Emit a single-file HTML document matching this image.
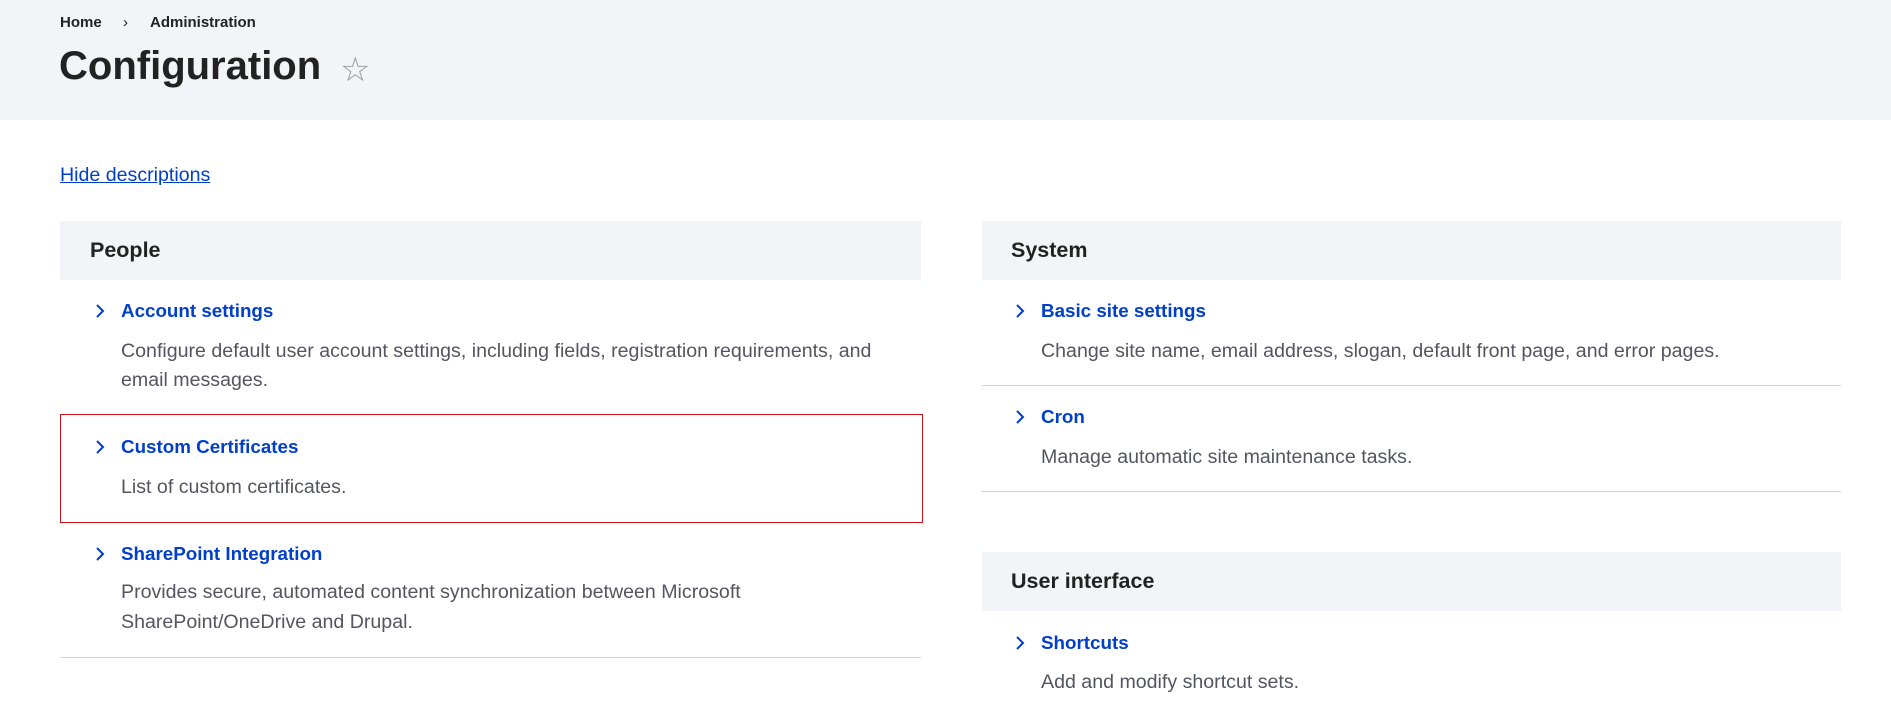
<!DOCTYPE html>
<html><head><meta charset="utf-8"><style>
body{margin:0;width:1891px;height:716px;overflow:hidden;background:#fff;font-family:"Liberation Sans",sans-serif;position:relative}
.a{position:absolute;white-space:nowrap}
.hdr{position:absolute;left:0;top:0;width:1891px;height:120px;background:#f3f4f7}
.bc{font-size:15px;font-weight:bold;color:#222;top:14px}
.box{position:absolute;background:#f3f4f7}
.h2{font-size:21.5px;font-weight:bold;color:#222}
.lk{font-size:18.8px;font-weight:bold;color:#003ecc}
.ds{font-size:19.6px;color:#545560}
.ln{position:absolute;height:1px;background:#d4d4d8}
.chev{position:absolute;width:14px;height:18px}
</style></head><body>
<div class="hdr"></div>
<div class="a bc" style="left:60px">Home</div>
<div class="a bc" style="left:123px;font-weight:normal">›</div>
<div class="a bc" style="left:150px">Administration</div>
<div class="a" style="left:59px;top:44px;font-size:40px;font-weight:bold;color:#222">Configuration</div>
<div class="a" style="left:340px;top:50px;font-size:34px;color:#999">☆</div>
<div class="a" style="left:60px;top:164px;font-size:19.6px;color:#003ecc;text-decoration:underline">Hide descriptions</div>

<div class="box" style="left:60px;top:221px;width:861px;height:59px"></div>
<div class="a h2" style="left:90px;top:238px">People</div>
<div class="box" style="left:982px;top:221px;width:859px;height:59px"></div>
<div class="a h2" style="left:1011px;top:238px">System</div>
<div class="box" style="left:982px;top:552px;width:859px;height:59px"></div>
<div class="a h2" style="left:1011px;top:569px">User interface</div>

<svg class="chev" style="left:93px;top:302px" viewBox="0 0 14 18"><path d="M4 3l6 6-6 6" fill="none" stroke="#003ecc" stroke-width="2"/></svg>
<div class="a lk" style="left:121px;top:300px">Account settings</div>
<div class="a ds" style="left:121px;top:340px">Configure default user account settings, including fields, registration requirements, and</div>
<div class="a ds" style="left:121px;top:369px">email messages.</div>

<div style="position:absolute;left:60px;top:414px;width:861px;height:107px;border:1.5px solid #d0121b"></div>
<svg class="chev" style="left:93px;top:438px" viewBox="0 0 14 18"><path d="M4 3l6 6-6 6" fill="none" stroke="#003ecc" stroke-width="2"/></svg>
<div class="a lk" style="left:121px;top:436px">Custom Certificates</div>
<div class="a ds" style="left:121px;top:476px">List of custom certificates.</div>

<svg class="chev" style="left:93px;top:545px" viewBox="0 0 14 18"><path d="M4 3l6 6-6 6" fill="none" stroke="#003ecc" stroke-width="2"/></svg>
<div class="a lk" style="left:121px;top:543px">SharePoint Integration</div>
<div class="a ds" style="left:121px;top:581px">Provides secure, automated content synchronization between Microsoft</div>
<div class="a ds" style="left:121px;top:611px">SharePoint/OneDrive and Drupal.</div>
<div class="ln" style="left:60px;top:657px;width:861px"></div>

<svg class="chev" style="left:1013px;top:302px" viewBox="0 0 14 18"><path d="M4 3l6 6-6 6" fill="none" stroke="#003ecc" stroke-width="2"/></svg>
<div class="a lk" style="left:1041px;top:300px">Basic site settings</div>
<div class="a ds" style="left:1041px;top:340px">Change site name, email address, slogan, default front page, and error pages.</div>
<div class="ln" style="left:982px;top:385px;width:859px"></div>
<svg class="chev" style="left:1013px;top:408px" viewBox="0 0 14 18"><path d="M4 3l6 6-6 6" fill="none" stroke="#003ecc" stroke-width="2"/></svg>
<div class="a lk" style="left:1041px;top:406px">Cron</div>
<div class="a ds" style="left:1041px;top:446px">Manage automatic site maintenance tasks.</div>
<div class="ln" style="left:982px;top:491px;width:859px"></div>
<svg class="chev" style="left:1013px;top:634px" viewBox="0 0 14 18"><path d="M4 3l6 6-6 6" fill="none" stroke="#003ecc" stroke-width="2"/></svg>
<div class="a lk" style="left:1041px;top:632px">Shortcuts</div>
<div class="a ds" style="left:1041px;top:671px">Add and modify shortcut sets.</div>
</body></html>
